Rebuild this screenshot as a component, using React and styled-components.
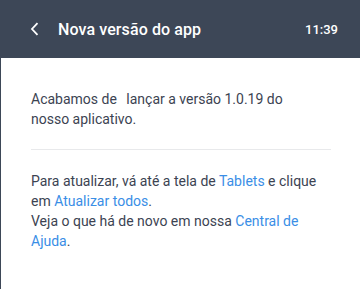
import styled, { createGlobalStyle } from 'styled-components';

const GlobalStyle = createGlobalStyle`
  html, body {
    margin: 0;
    padding: 0;
    background: #ffffff;
    font-family: Roboto, "Noto Sans", sans-serif;
  }
`;

const Screen = styled.div`
  width: 360px;
  height: 289px;
  display: flex;
  flex-direction: column;
  overflow: hidden;
  background: #ffffff;
`;

const Header = styled.div`
  height: 58px;
  flex-shrink: 0;
  background: #3d4757;
  display: flex;
  align-items: center;
  padding: 0 22px 0 26px;
  color: #ffffff;
`;

const BackButton = styled.div`
  width: 16px;
  height: 20px;
  display: flex;
  align-items: center;
  justify-content: center;
  margin-right: 16px;
`;

const Title = styled.div`
  flex: 1;
  font-size: 16px;
  font-weight: 500;
  letter-spacing: 0.1px;
`;

const Time = styled.div`
  font-size: 13px;
  font-weight: 500;
`;

const Body = styled.div`
  flex: 1;
  border-left: 1px solid #3d4757;
  padding: 31px 29px 0 30px;
  color: #3c4352;
  font-size: 14px;
  line-height: 20px;
`;

const Paragraph = styled.p`
  margin: 0;
  padding-right: 9px;
`;

const WideSpace = styled.span`
  display: inline-block;
  width: 9.5px;
`;

const Divider = styled.hr`
  border: none;
  border-top: 1px solid #e8e9eb;
  margin: 20px 0 21px;
`;

const Link = styled.a`
  color: #3a8ee6;
  text-decoration: none;
`;

export default function App() {
  return (
    <>
      <GlobalStyle />
      <Screen>
        <Header>
          <BackButton>
            <svg width="9" height="14" viewBox="0 0 9 14" fill="none">
              <path d="M7.5 1.2L2 7l5.5 5.8" stroke="#ffffff" strokeWidth="1.8" />
            </svg>
          </BackButton>
          <Title>Nova versão do app</Title>
          <Time>11:39</Time>
        </Header>
        <Body>
          <Paragraph>
            Acabamos de<WideSpace />lançar a versão 1.0.19 do nosso aplicativo.
          </Paragraph>
          <Divider />
          <Paragraph>
            Para atualizar, vá até a tela de <Link>Tablets</Link> e clique em{' '}
            <Link>Atualizar todos</Link>.
          </Paragraph>
          <Paragraph>
            Veja o que há de novo em nossa <Link>Central de Ajuda</Link>.
          </Paragraph>
        </Body>
      </Screen>
    </>
  );
}
